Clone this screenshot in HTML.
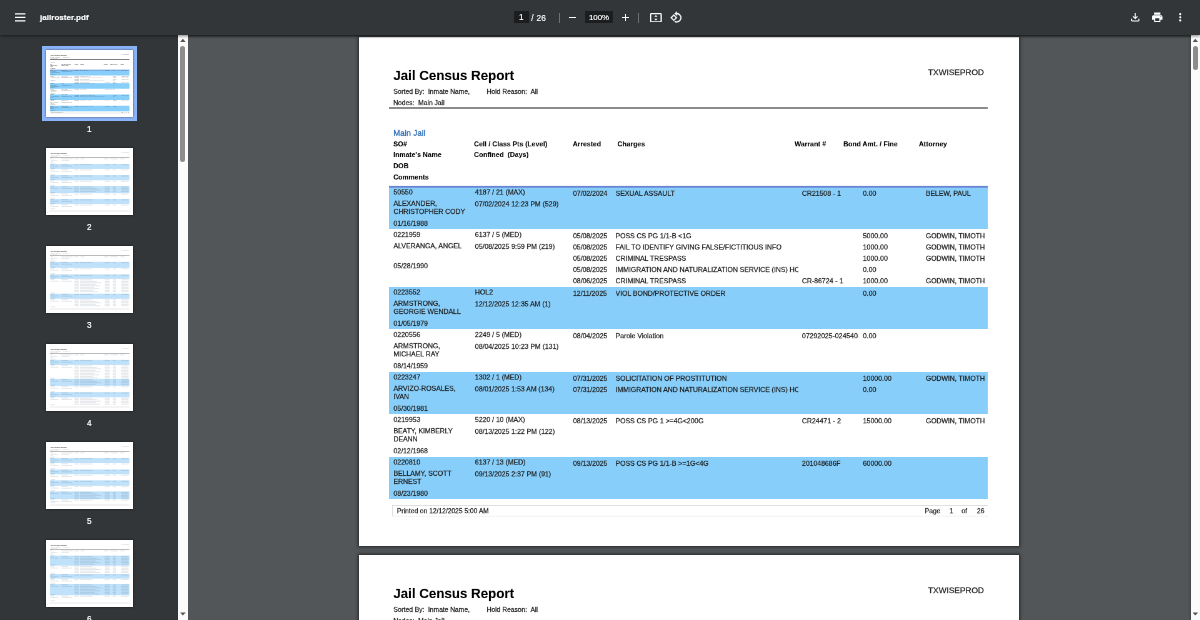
<!DOCTYPE html>
<html lang="en"><head><meta charset="utf-8"><title>jailroster.pdf</title>
<style>
html,body{margin:0;padding:0}
body{width:1200px;height:620px;overflow:hidden;position:relative;background:#525659;font-family:"Liberation Sans",Arial,sans-serif;}
#main{position:absolute;left:188px;top:35px;width:1002.5px;height:585px;background:#525659;overflow:hidden}
#mshadow{position:absolute;left:178px;top:35px;width:1022px;height:3px;background:linear-gradient(#2c2f31,rgba(50,54,57,0));}
.pg{position:absolute;width:1056px;height:816px;background:#fff;transform-origin:0 0;overflow:hidden;color:#1c1c1c;will-change:transform}
.pg span{position:absolute;white-space:nowrap;display:block;-webkit-text-stroke:0.3px}
.pg i{position:absolute;display:block}
.pg .b{font-weight:bold;color:#000;-webkit-text-stroke:0.08px}
.band{background:#87cefa}
.hline{height:2.9px;background:#6a84d4}
.rule{height:2.7px;background:#8c8c8c}
.fbox{box-sizing:border-box;border:1.6px solid #dcdcdc;border-right:none;background:#fff}
.pshadow{position:absolute;background:transparent;box-shadow:0 0 3px 1px rgba(0,0,0,.55)}
#tb{position:absolute;left:0;top:0;width:1200px;height:35px;background:#323639;color:#fff;box-shadow:0 1px 3px rgba(0,0,0,.5);will-change:transform}
#side{position:absolute;left:0;top:35px;width:178px;height:585px;background:#323639;overflow:hidden;will-change:transform}
.sb{position:absolute;top:35px;width:10px;height:585px;background:#fbfbfb}
.sb b{position:absolute;left:2.3px;width:5.2px;border-radius:3px;background:#8c8c8c;display:block}
.sb i{position:absolute;left:2.1px;width:5.6px;height:3.2px;background:#555;display:block}
.sb .up{top:3.7px;clip-path:polygon(50% 0,100% 100%,0 100%)}
.sb .dn{bottom:4.4px;clip-path:polygon(0 0,100% 0,50% 100%)}
.th{position:absolute;left:45.6px;width:87.6px;height:67.7px;background:#fff;overflow:hidden;box-shadow:0 0 2px rgba(0,0,0,.6)}
.th .pg{transform:scale(0.08296)}
.th .pg span{-webkit-text-stroke:0;color:#3a3a3a;opacity:.6}
.th .pg .b{color:#222;opacity:.75}
.th .hline{height:8px}
.th .rule{height:9px;background:#555;margin-top:-3px}
.th .fbox{border-width:5px;border-color:#e4e4e4}
.lite .band{background:#bfe1f9}
.lite .pg span{color:#999}
.lite .pg .b{color:#999}
.lite .rule{background:#999;height:8px}
.sm{height:9px;background:rgba(40,60,90,.16)}
.tl{position:absolute;left:45.3px;width:88px;text-align:center;color:#fff;font-size:8.2px;line-height:10px;-webkit-text-stroke:0.2px;margin-top:.7px}
#sel{position:absolute;left:41.6px;top:46px;width:95.4px;height:75.2px;background:#8ab4f8}
#tb span,#tb i,#tb svg{position:absolute;display:block}
#tb span{-webkit-text-stroke:0.15px}
</style></head><body>
<div id="main">
<div class="pshadow" style="left:171.0px;top:2.0px;width:660px;height:509.4px"></div>
<div class="pshadow" style="left:171.0px;top:520px;width:660px;height:510px"></div>
<div class="pg big" style="left:171.0px;top:2.0px;height:815px;transform:scale(.625)">
<span class="b" style="left:54.88px;top:51.94px;font-size:21.33px;line-height:21.33px;color:#000;">Jail Census Report</span>
<span style="left:910.4px;top:49.84px;font-size:13.33px;line-height:13.33px;">TXWISEPROD</span>
<span style="left:54.88px;top:81.85px;font-size:10.67px;line-height:10.67px;">Sorted By:</span>
<span style="left:110.4px;top:81.85px;font-size:10.67px;line-height:10.67px;">Inmate Name,</span>
<span style="left:204.32px;top:81.85px;font-size:10.67px;line-height:10.67px;">Hold Reason:</span>
<span style="left:274.4px;top:81.85px;font-size:10.67px;line-height:10.67px;">All</span>
<span style="left:54.88px;top:99.77px;font-size:10.67px;line-height:10.67px;">Nodes:</span>
<span style="left:94.72px;top:99.77px;font-size:10.67px;line-height:10.67px;">Main Jail</span>
<i class="rule" style="left:48.0px;top:112.0px;width:958.4px"></i>
<span style="left:54.88px;top:146.6px;font-size:13px;line-height:13px;color:#2a6ab5;">Main Jail</span>
<span class="b" style="left:54.88px;top:165.89px;font-size:11px;line-height:11px;">SO#</span>
<span class="b" style="left:54.88px;top:183.49px;font-size:11px;line-height:11px;">Inmate's Name</span>
<span class="b" style="left:54.88px;top:201.41px;font-size:11px;line-height:11px;">DOB</span>
<span class="b" style="left:54.88px;top:219.49px;font-size:11px;line-height:11px;">Comments</span>
<span class="b" style="left:184.0px;top:165.89px;font-size:11px;line-height:11px;">Cell / Class Pts (Level)</span>
<span class="b" style="left:184.0px;top:183.49px;font-size:11px;line-height:11px;">Confined  (Days)</span>
<span class="b" style="left:341.92px;top:165.89px;font-size:11px;line-height:11px;">Arrested</span>
<span class="b" style="left:413.6px;top:165.89px;font-size:11px;line-height:11px;">Charges</span>
<span class="b" style="left:697.12px;top:165.89px;font-size:11px;line-height:11px;">Warrant #</span>
<span class="b" style="left:774.88px;top:165.89px;font-size:11px;line-height:11px;">Bond Amt. / Fine</span>
<span class="b" style="left:895.68px;top:165.89px;font-size:11px;line-height:11px;">Attorney</span>
<i class="band" style="left:48.0px;top:239.82px;width:957.6px;height:67.3px"></i>
<i class="hline" style="left:48.0px;top:238.42px;width:957.6px"></i>
<span style="left:55.2px;top:243.21px;font-size:11px;line-height:11px;">50550</span>
<span style="left:55.2px;top:260.81px;font-size:11px;line-height:11px;">ALEXANDER,</span>
<span style="left:55.2px;top:274.11px;font-size:11px;line-height:11px;">CHRISTOPHER CODY</span>
<span style="left:55.2px;top:292.81px;font-size:11px;line-height:11px;">01/16/1988</span>
<span style="left:185.6px;top:243.21px;font-size:11px;line-height:11px;">4187 / 21 (MAX)</span>
<span style="left:185.6px;top:262.41px;font-size:11px;line-height:11px;">07/02/2024 12:23 PM (529)</span>
<span style="left:342.4px;top:245.41px;font-size:11px;line-height:11px;">07/02/2024</span>
<span style="left:410.56px;top:245.41px;font-size:11px;line-height:11px;width:292.16px;overflow:hidden;">SEXUAL ASSAULT</span>
<span style="left:708.8px;top:245.41px;font-size:11px;line-height:11px;width:90.56px;overflow:hidden;">CR21508 - 1</span>
<span style="left:806.24px;top:245.41px;font-size:11px;line-height:11px;">0.00</span>
<span style="left:906.88px;top:245.41px;font-size:11px;line-height:11px;width:94.4px;overflow:hidden;">BELEW, PAUL</span>
<span style="left:55.2px;top:311.21px;font-size:11px;line-height:11px;">0221959</span>
<span style="left:55.2px;top:328.81px;font-size:11px;line-height:11px;">ALVERANGA, ANGEL</span>
<span style="left:55.2px;top:360.81px;font-size:11px;line-height:11px;">05/28/1990</span>
<span style="left:185.6px;top:311.21px;font-size:11px;line-height:11px;">6137 / 5 (MED)</span>
<span style="left:185.6px;top:330.41px;font-size:11px;line-height:11px;">05/08/2025 9:59 PM (219)</span>
<span style="left:342.4px;top:313.41px;font-size:11px;line-height:11px;">05/08/2025</span>
<span style="left:410.56px;top:313.41px;font-size:11px;line-height:11px;width:292.16px;overflow:hidden;">POSS CS PG 1/1-B &lt;1G</span>
<span style="left:806.24px;top:313.41px;font-size:11px;line-height:11px;">5000.00</span>
<span style="left:906.88px;top:313.41px;font-size:11px;line-height:11px;width:94.4px;overflow:hidden;">GODWIN, TIMOTHY</span>
<span style="left:342.4px;top:331.41px;font-size:11px;line-height:11px;">05/08/2025</span>
<span style="left:410.56px;top:331.41px;font-size:11px;line-height:11px;width:292.16px;overflow:hidden;">FAIL TO IDENTIFY GIVING FALSE/FICTITIOUS INFO</span>
<span style="left:806.24px;top:331.41px;font-size:11px;line-height:11px;">1000.00</span>
<span style="left:906.88px;top:331.41px;font-size:11px;line-height:11px;width:94.4px;overflow:hidden;">GODWIN, TIMOTHY</span>
<span style="left:342.4px;top:349.41px;font-size:11px;line-height:11px;">05/08/2025</span>
<span style="left:410.56px;top:349.41px;font-size:11px;line-height:11px;width:292.16px;overflow:hidden;">CRIMINAL TRESPASS</span>
<span style="left:806.24px;top:349.41px;font-size:11px;line-height:11px;">1000.00</span>
<span style="left:906.88px;top:349.41px;font-size:11px;line-height:11px;width:94.4px;overflow:hidden;">GODWIN, TIMOTHY</span>
<span style="left:342.4px;top:367.41px;font-size:11px;line-height:11px;">05/08/2025</span>
<span style="left:410.56px;top:367.41px;font-size:11px;line-height:11px;width:292.16px;overflow:hidden;">IMMIGRATION AND NATURALIZATION SERVICE (INS) HOLD</span>
<span style="left:806.24px;top:367.41px;font-size:11px;line-height:11px;">0.00</span>
<span style="left:342.4px;top:385.41px;font-size:11px;line-height:11px;">08/06/2025</span>
<span style="left:410.56px;top:385.41px;font-size:11px;line-height:11px;width:292.16px;overflow:hidden;">CRIMINAL TRESPASS</span>
<span style="left:708.8px;top:385.41px;font-size:11px;line-height:11px;width:90.56px;overflow:hidden;">CR-86724 - 1</span>
<span style="left:806.24px;top:385.41px;font-size:11px;line-height:11px;">1000.00</span>
<span style="left:906.88px;top:385.41px;font-size:11px;line-height:11px;width:94.4px;overflow:hidden;">GODWIN, TIMOTHY</span>
<i class="band" style="left:48.0px;top:399.82px;width:957.6px;height:67.3px"></i>
<span style="left:55.2px;top:403.21px;font-size:11px;line-height:11px;">0223552</span>
<span style="left:55.2px;top:420.81px;font-size:11px;line-height:11px;">ARMSTRONG,</span>
<span style="left:55.2px;top:434.11px;font-size:11px;line-height:11px;">GEORGIE WENDALL</span>
<span style="left:55.2px;top:452.81px;font-size:11px;line-height:11px;">01/05/1979</span>
<span style="left:185.6px;top:403.21px;font-size:11px;line-height:11px;">HOL2</span>
<span style="left:185.6px;top:422.41px;font-size:11px;line-height:11px;">12/12/2025 12:35 AM (1)</span>
<span style="left:342.4px;top:405.41px;font-size:11px;line-height:11px;">12/11/2025</span>
<span style="left:410.56px;top:405.41px;font-size:11px;line-height:11px;width:292.16px;overflow:hidden;">VIOL BOND/PROTECTIVE ORDER</span>
<span style="left:806.24px;top:405.41px;font-size:11px;line-height:11px;">0.00</span>
<span style="left:55.2px;top:471.21px;font-size:11px;line-height:11px;">0220556</span>
<span style="left:55.2px;top:488.81px;font-size:11px;line-height:11px;">ARMSTRONG,</span>
<span style="left:55.2px;top:502.11px;font-size:11px;line-height:11px;">MICHAEL RAY</span>
<span style="left:55.2px;top:520.81px;font-size:11px;line-height:11px;">08/14/1959</span>
<span style="left:185.6px;top:471.21px;font-size:11px;line-height:11px;">2249 / 5 (MED)</span>
<span style="left:185.6px;top:490.41px;font-size:11px;line-height:11px;">08/04/2025 10:23 PM (131)</span>
<span style="left:342.4px;top:473.41px;font-size:11px;line-height:11px;">08/04/2025</span>
<span style="left:410.56px;top:473.41px;font-size:11px;line-height:11px;width:292.16px;overflow:hidden;">Parole Violation</span>
<span style="left:708.8px;top:473.41px;font-size:11px;line-height:11px;width:90.56px;overflow:hidden;">07292025-02454036</span>
<span style="left:806.24px;top:473.41px;font-size:11px;line-height:11px;">0.00</span>
<i class="band" style="left:48.0px;top:535.82px;width:957.6px;height:67.3px"></i>
<span style="left:55.2px;top:539.21px;font-size:11px;line-height:11px;">0223247</span>
<span style="left:55.2px;top:556.81px;font-size:11px;line-height:11px;">ARVIZO-ROSALES,</span>
<span style="left:55.2px;top:570.11px;font-size:11px;line-height:11px;">IVAN</span>
<span style="left:55.2px;top:588.81px;font-size:11px;line-height:11px;">05/30/1981</span>
<span style="left:185.6px;top:539.21px;font-size:11px;line-height:11px;">1302 / 1 (MED)</span>
<span style="left:185.6px;top:558.41px;font-size:11px;line-height:11px;">08/01/2025 1:53 AM (134)</span>
<span style="left:342.4px;top:541.41px;font-size:11px;line-height:11px;">07/31/2025</span>
<span style="left:410.56px;top:541.41px;font-size:11px;line-height:11px;width:292.16px;overflow:hidden;">SOLICITATION OF PROSTITUTION</span>
<span style="left:806.24px;top:541.41px;font-size:11px;line-height:11px;">10000.00</span>
<span style="left:906.88px;top:541.41px;font-size:11px;line-height:11px;width:94.4px;overflow:hidden;">GODWIN, TIMOTHY</span>
<span style="left:342.4px;top:559.41px;font-size:11px;line-height:11px;">07/31/2025</span>
<span style="left:410.56px;top:559.41px;font-size:11px;line-height:11px;width:292.16px;overflow:hidden;">IMMIGRATION AND NATURALIZATION SERVICE (INS) HOLD</span>
<span style="left:806.24px;top:559.41px;font-size:11px;line-height:11px;">0.00</span>
<span style="left:55.2px;top:607.21px;font-size:11px;line-height:11px;">0219953</span>
<span style="left:55.2px;top:624.81px;font-size:11px;line-height:11px;">BEATY, KIMBERLY</span>
<span style="left:55.2px;top:638.11px;font-size:11px;line-height:11px;">DEANN</span>
<span style="left:55.2px;top:656.81px;font-size:11px;line-height:11px;">02/12/1968</span>
<span style="left:185.6px;top:607.21px;font-size:11px;line-height:11px;">5220 / 10 (MAX)</span>
<span style="left:185.6px;top:626.41px;font-size:11px;line-height:11px;">08/13/2025 1:22 PM (122)</span>
<span style="left:342.4px;top:609.41px;font-size:11px;line-height:11px;">08/13/2025</span>
<span style="left:410.56px;top:609.41px;font-size:11px;line-height:11px;width:292.16px;overflow:hidden;">POSS CS PG 1 &gt;=4G&lt;200G</span>
<span style="left:708.8px;top:609.41px;font-size:11px;line-height:11px;width:90.56px;overflow:hidden;">CR24471 - 2</span>
<span style="left:806.24px;top:609.41px;font-size:11px;line-height:11px;">15000.00</span>
<span style="left:906.88px;top:609.41px;font-size:11px;line-height:11px;width:94.4px;overflow:hidden;">GODWIN, TIMOTHY</span>
<i class="band" style="left:48.0px;top:671.82px;width:957.6px;height:67.3px"></i>
<span style="left:55.2px;top:675.21px;font-size:11px;line-height:11px;">0220810</span>
<span style="left:55.2px;top:692.81px;font-size:11px;line-height:11px;">BELLAMY, SCOTT</span>
<span style="left:55.2px;top:706.11px;font-size:11px;line-height:11px;">ERNEST</span>
<span style="left:55.2px;top:724.81px;font-size:11px;line-height:11px;">08/23/1980</span>
<span style="left:185.6px;top:675.21px;font-size:11px;line-height:11px;">6137 / 13 (MED)</span>
<span style="left:185.6px;top:694.41px;font-size:11px;line-height:11px;">09/13/2025 2:37 PM (91)</span>
<span style="left:342.4px;top:677.41px;font-size:11px;line-height:11px;">09/13/2025</span>
<span style="left:410.56px;top:677.41px;font-size:11px;line-height:11px;width:292.16px;overflow:hidden;">POSS CS PG 1/1-B &gt;=1G&lt;4G</span>
<span style="left:708.8px;top:677.41px;font-size:11px;line-height:11px;width:90.56px;overflow:hidden;">201048686F</span>
<span style="left:806.24px;top:677.41px;font-size:11px;line-height:11px;">60000.00</span>
<i class="fbox" style="left:53.12px;top:748.96px;width:953.28px;height:17.76px"></i>
<span style="left:60.8px;top:752.73px;font-size:10.67px;line-height:10.67px;">Printed on 12/12/2025 5:00 AM</span>
<span style="left:905.28px;top:752.73px;font-size:10.67px;line-height:10.67px;">Page</span>
<span style="left:944.8px;top:752.73px;font-size:10.67px;line-height:10.67px;">1</span>
<span style="left:964.0px;top:752.73px;font-size:10.67px;line-height:10.67px;">of</span>
<span style="left:988.8px;top:752.73px;font-size:10.67px;line-height:10.67px;">26</span>
</div>
<div class="pg big" style="left:171.0px;top:520px;transform:scale(.625)">
<span class="b" style="left:54.88px;top:51.94px;font-size:21.33px;line-height:21.33px;color:#000;">Jail Census Report</span>
<span style="left:910.4px;top:49.84px;font-size:13.33px;line-height:13.33px;">TXWISEPROD</span>
<span style="left:54.88px;top:81.85px;font-size:10.67px;line-height:10.67px;">Sorted By:</span>
<span style="left:110.4px;top:81.85px;font-size:10.67px;line-height:10.67px;">Inmate Name,</span>
<span style="left:204.32px;top:81.85px;font-size:10.67px;line-height:10.67px;">Hold Reason:</span>
<span style="left:274.4px;top:81.85px;font-size:10.67px;line-height:10.67px;">All</span>
<span style="left:54.88px;top:99.77px;font-size:10.67px;line-height:10.67px;">Nodes:</span>
<span style="left:94.72px;top:99.77px;font-size:10.67px;line-height:10.67px;">Main Jail</span>
<i class="rule" style="left:48.0px;top:112.0px;width:958.4px"></i>
</div>
</div>
<div id="mshadow"></div>
<div id="side">
<div id="sel" style="top:11px"></div>
<div class="th" style="top:14.700000000000003px"><div class="pg" style="left:0;top:0">
<span class="b" style="left:54.88px;top:51.94px;font-size:21.33px;line-height:21.33px;color:#000;">Jail Census Report</span>
<span style="left:910.4px;top:49.84px;font-size:13.33px;line-height:13.33px;">TXWISEPROD</span>
<span style="left:54.88px;top:81.85px;font-size:10.67px;line-height:10.67px;">Sorted By:</span>
<span style="left:110.4px;top:81.85px;font-size:10.67px;line-height:10.67px;">Inmate Name,</span>
<span style="left:204.32px;top:81.85px;font-size:10.67px;line-height:10.67px;">Hold Reason:</span>
<span style="left:274.4px;top:81.85px;font-size:10.67px;line-height:10.67px;">All</span>
<span style="left:54.88px;top:99.77px;font-size:10.67px;line-height:10.67px;">Nodes:</span>
<span style="left:94.72px;top:99.77px;font-size:10.67px;line-height:10.67px;">Main Jail</span>
<i class="rule" style="left:48.0px;top:112.0px;width:958.4px"></i>
<span style="left:54.88px;top:146.6px;font-size:13px;line-height:13px;color:#2a6ab5;">Main Jail</span>
<span class="b" style="left:54.88px;top:165.89px;font-size:11px;line-height:11px;">SO#</span>
<span class="b" style="left:54.88px;top:183.49px;font-size:11px;line-height:11px;">Inmate's Name</span>
<span class="b" style="left:54.88px;top:201.41px;font-size:11px;line-height:11px;">DOB</span>
<span class="b" style="left:54.88px;top:219.49px;font-size:11px;line-height:11px;">Comments</span>
<span class="b" style="left:184.0px;top:165.89px;font-size:11px;line-height:11px;">Cell / Class Pts (Level)</span>
<span class="b" style="left:184.0px;top:183.49px;font-size:11px;line-height:11px;">Confined  (Days)</span>
<span class="b" style="left:341.92px;top:165.89px;font-size:11px;line-height:11px;">Arrested</span>
<span class="b" style="left:413.6px;top:165.89px;font-size:11px;line-height:11px;">Charges</span>
<span class="b" style="left:697.12px;top:165.89px;font-size:11px;line-height:11px;">Warrant #</span>
<span class="b" style="left:774.88px;top:165.89px;font-size:11px;line-height:11px;">Bond Amt. / Fine</span>
<span class="b" style="left:895.68px;top:165.89px;font-size:11px;line-height:11px;">Attorney</span>
<i class="band" style="left:48.0px;top:239.82px;width:957.6px;height:67.3px"></i>
<i class="hline" style="left:48.0px;top:238.42px;width:957.6px"></i>
<span style="left:55.2px;top:243.21px;font-size:11px;line-height:11px;">50550</span>
<span style="left:55.2px;top:260.81px;font-size:11px;line-height:11px;">ALEXANDER,</span>
<span style="left:55.2px;top:274.11px;font-size:11px;line-height:11px;">CHRISTOPHER CODY</span>
<span style="left:55.2px;top:292.81px;font-size:11px;line-height:11px;">01/16/1988</span>
<span style="left:185.6px;top:243.21px;font-size:11px;line-height:11px;">4187 / 21 (MAX)</span>
<span style="left:185.6px;top:262.41px;font-size:11px;line-height:11px;">07/02/2024 12:23 PM (529)</span>
<span style="left:342.4px;top:245.41px;font-size:11px;line-height:11px;">07/02/2024</span>
<span style="left:410.56px;top:245.41px;font-size:11px;line-height:11px;width:292.16px;overflow:hidden;">SEXUAL ASSAULT</span>
<span style="left:708.8px;top:245.41px;font-size:11px;line-height:11px;width:90.56px;overflow:hidden;">CR21508 - 1</span>
<span style="left:806.24px;top:245.41px;font-size:11px;line-height:11px;">0.00</span>
<span style="left:906.88px;top:245.41px;font-size:11px;line-height:11px;width:94.4px;overflow:hidden;">BELEW, PAUL</span>
<span style="left:55.2px;top:311.21px;font-size:11px;line-height:11px;">0221959</span>
<span style="left:55.2px;top:328.81px;font-size:11px;line-height:11px;">ALVERANGA, ANGEL</span>
<span style="left:55.2px;top:360.81px;font-size:11px;line-height:11px;">05/28/1990</span>
<span style="left:185.6px;top:311.21px;font-size:11px;line-height:11px;">6137 / 5 (MED)</span>
<span style="left:185.6px;top:330.41px;font-size:11px;line-height:11px;">05/08/2025 9:59 PM (219)</span>
<span style="left:342.4px;top:313.41px;font-size:11px;line-height:11px;">05/08/2025</span>
<span style="left:410.56px;top:313.41px;font-size:11px;line-height:11px;width:292.16px;overflow:hidden;">POSS CS PG 1/1-B &lt;1G</span>
<span style="left:806.24px;top:313.41px;font-size:11px;line-height:11px;">5000.00</span>
<span style="left:906.88px;top:313.41px;font-size:11px;line-height:11px;width:94.4px;overflow:hidden;">GODWIN, TIMOTHY</span>
<span style="left:342.4px;top:331.41px;font-size:11px;line-height:11px;">05/08/2025</span>
<span style="left:410.56px;top:331.41px;font-size:11px;line-height:11px;width:292.16px;overflow:hidden;">FAIL TO IDENTIFY GIVING FALSE/FICTITIOUS INFO</span>
<span style="left:806.24px;top:331.41px;font-size:11px;line-height:11px;">1000.00</span>
<span style="left:906.88px;top:331.41px;font-size:11px;line-height:11px;width:94.4px;overflow:hidden;">GODWIN, TIMOTHY</span>
<span style="left:342.4px;top:349.41px;font-size:11px;line-height:11px;">05/08/2025</span>
<span style="left:410.56px;top:349.41px;font-size:11px;line-height:11px;width:292.16px;overflow:hidden;">CRIMINAL TRESPASS</span>
<span style="left:806.24px;top:349.41px;font-size:11px;line-height:11px;">1000.00</span>
<span style="left:906.88px;top:349.41px;font-size:11px;line-height:11px;width:94.4px;overflow:hidden;">GODWIN, TIMOTHY</span>
<span style="left:342.4px;top:367.41px;font-size:11px;line-height:11px;">05/08/2025</span>
<span style="left:410.56px;top:367.41px;font-size:11px;line-height:11px;width:292.16px;overflow:hidden;">IMMIGRATION AND NATURALIZATION SERVICE (INS) HOLD</span>
<span style="left:806.24px;top:367.41px;font-size:11px;line-height:11px;">0.00</span>
<span style="left:342.4px;top:385.41px;font-size:11px;line-height:11px;">08/06/2025</span>
<span style="left:410.56px;top:385.41px;font-size:11px;line-height:11px;width:292.16px;overflow:hidden;">CRIMINAL TRESPASS</span>
<span style="left:708.8px;top:385.41px;font-size:11px;line-height:11px;width:90.56px;overflow:hidden;">CR-86724 - 1</span>
<span style="left:806.24px;top:385.41px;font-size:11px;line-height:11px;">1000.00</span>
<span style="left:906.88px;top:385.41px;font-size:11px;line-height:11px;width:94.4px;overflow:hidden;">GODWIN, TIMOTHY</span>
<i class="band" style="left:48.0px;top:399.82px;width:957.6px;height:67.3px"></i>
<span style="left:55.2px;top:403.21px;font-size:11px;line-height:11px;">0223552</span>
<span style="left:55.2px;top:420.81px;font-size:11px;line-height:11px;">ARMSTRONG,</span>
<span style="left:55.2px;top:434.11px;font-size:11px;line-height:11px;">GEORGIE WENDALL</span>
<span style="left:55.2px;top:452.81px;font-size:11px;line-height:11px;">01/05/1979</span>
<span style="left:185.6px;top:403.21px;font-size:11px;line-height:11px;">HOL2</span>
<span style="left:185.6px;top:422.41px;font-size:11px;line-height:11px;">12/12/2025 12:35 AM (1)</span>
<span style="left:342.4px;top:405.41px;font-size:11px;line-height:11px;">12/11/2025</span>
<span style="left:410.56px;top:405.41px;font-size:11px;line-height:11px;width:292.16px;overflow:hidden;">VIOL BOND/PROTECTIVE ORDER</span>
<span style="left:806.24px;top:405.41px;font-size:11px;line-height:11px;">0.00</span>
<span style="left:55.2px;top:471.21px;font-size:11px;line-height:11px;">0220556</span>
<span style="left:55.2px;top:488.81px;font-size:11px;line-height:11px;">ARMSTRONG,</span>
<span style="left:55.2px;top:502.11px;font-size:11px;line-height:11px;">MICHAEL RAY</span>
<span style="left:55.2px;top:520.81px;font-size:11px;line-height:11px;">08/14/1959</span>
<span style="left:185.6px;top:471.21px;font-size:11px;line-height:11px;">2249 / 5 (MED)</span>
<span style="left:185.6px;top:490.41px;font-size:11px;line-height:11px;">08/04/2025 10:23 PM (131)</span>
<span style="left:342.4px;top:473.41px;font-size:11px;line-height:11px;">08/04/2025</span>
<span style="left:410.56px;top:473.41px;font-size:11px;line-height:11px;width:292.16px;overflow:hidden;">Parole Violation</span>
<span style="left:708.8px;top:473.41px;font-size:11px;line-height:11px;width:90.56px;overflow:hidden;">07292025-02454036</span>
<span style="left:806.24px;top:473.41px;font-size:11px;line-height:11px;">0.00</span>
<i class="band" style="left:48.0px;top:535.82px;width:957.6px;height:67.3px"></i>
<span style="left:55.2px;top:539.21px;font-size:11px;line-height:11px;">0223247</span>
<span style="left:55.2px;top:556.81px;font-size:11px;line-height:11px;">ARVIZO-ROSALES,</span>
<span style="left:55.2px;top:570.11px;font-size:11px;line-height:11px;">IVAN</span>
<span style="left:55.2px;top:588.81px;font-size:11px;line-height:11px;">05/30/1981</span>
<span style="left:185.6px;top:539.21px;font-size:11px;line-height:11px;">1302 / 1 (MED)</span>
<span style="left:185.6px;top:558.41px;font-size:11px;line-height:11px;">08/01/2025 1:53 AM (134)</span>
<span style="left:342.4px;top:541.41px;font-size:11px;line-height:11px;">07/31/2025</span>
<span style="left:410.56px;top:541.41px;font-size:11px;line-height:11px;width:292.16px;overflow:hidden;">SOLICITATION OF PROSTITUTION</span>
<span style="left:806.24px;top:541.41px;font-size:11px;line-height:11px;">10000.00</span>
<span style="left:906.88px;top:541.41px;font-size:11px;line-height:11px;width:94.4px;overflow:hidden;">GODWIN, TIMOTHY</span>
<span style="left:342.4px;top:559.41px;font-size:11px;line-height:11px;">07/31/2025</span>
<span style="left:410.56px;top:559.41px;font-size:11px;line-height:11px;width:292.16px;overflow:hidden;">IMMIGRATION AND NATURALIZATION SERVICE (INS) HOLD</span>
<span style="left:806.24px;top:559.41px;font-size:11px;line-height:11px;">0.00</span>
<span style="left:55.2px;top:607.21px;font-size:11px;line-height:11px;">0219953</span>
<span style="left:55.2px;top:624.81px;font-size:11px;line-height:11px;">BEATY, KIMBERLY</span>
<span style="left:55.2px;top:638.11px;font-size:11px;line-height:11px;">DEANN</span>
<span style="left:55.2px;top:656.81px;font-size:11px;line-height:11px;">02/12/1968</span>
<span style="left:185.6px;top:607.21px;font-size:11px;line-height:11px;">5220 / 10 (MAX)</span>
<span style="left:185.6px;top:626.41px;font-size:11px;line-height:11px;">08/13/2025 1:22 PM (122)</span>
<span style="left:342.4px;top:609.41px;font-size:11px;line-height:11px;">08/13/2025</span>
<span style="left:410.56px;top:609.41px;font-size:11px;line-height:11px;width:292.16px;overflow:hidden;">POSS CS PG 1 &gt;=4G&lt;200G</span>
<span style="left:708.8px;top:609.41px;font-size:11px;line-height:11px;width:90.56px;overflow:hidden;">CR24471 - 2</span>
<span style="left:806.24px;top:609.41px;font-size:11px;line-height:11px;">15000.00</span>
<span style="left:906.88px;top:609.41px;font-size:11px;line-height:11px;width:94.4px;overflow:hidden;">GODWIN, TIMOTHY</span>
<i class="band" style="left:48.0px;top:671.82px;width:957.6px;height:67.3px"></i>
<span style="left:55.2px;top:675.21px;font-size:11px;line-height:11px;">0220810</span>
<span style="left:55.2px;top:692.81px;font-size:11px;line-height:11px;">BELLAMY, SCOTT</span>
<span style="left:55.2px;top:706.11px;font-size:11px;line-height:11px;">ERNEST</span>
<span style="left:55.2px;top:724.81px;font-size:11px;line-height:11px;">08/23/1980</span>
<span style="left:185.6px;top:675.21px;font-size:11px;line-height:11px;">6137 / 13 (MED)</span>
<span style="left:185.6px;top:694.41px;font-size:11px;line-height:11px;">09/13/2025 2:37 PM (91)</span>
<span style="left:342.4px;top:677.41px;font-size:11px;line-height:11px;">09/13/2025</span>
<span style="left:410.56px;top:677.41px;font-size:11px;line-height:11px;width:292.16px;overflow:hidden;">POSS CS PG 1/1-B &gt;=1G&lt;4G</span>
<span style="left:708.8px;top:677.41px;font-size:11px;line-height:11px;width:90.56px;overflow:hidden;">201048686F</span>
<span style="left:806.24px;top:677.41px;font-size:11px;line-height:11px;">60000.00</span>
<i class="fbox" style="left:53.12px;top:748.96px;width:953.28px;height:17.76px"></i>
<span style="left:60.8px;top:752.73px;font-size:10.67px;line-height:10.67px;">Printed on 12/12/2025 5:00 AM</span>
<span style="left:905.28px;top:752.73px;font-size:10.67px;line-height:10.67px;">Page</span>
<span style="left:944.8px;top:752.73px;font-size:10.67px;line-height:10.67px;">1</span>
<span style="left:964.0px;top:752.73px;font-size:10.67px;line-height:10.67px;">of</span>
<span style="left:988.8px;top:752.73px;font-size:10.67px;line-height:10.67px;">26</span>
</div></div>
<div class="tl" style="top:89.0px">1</div>
<div class="th lite" style="top:112.69999999999999px"><div class="pg" style="left:0;top:0">
<span class="b" style="left:54.88px;top:51.94px;font-size:21.33px;line-height:21.33px;color:#000;">Jail Census Report</span>
<span style="left:910.4px;top:49.84px;font-size:13.33px;line-height:13.33px;">TXWISEPROD</span>
<span style="left:54.88px;top:81.85px;font-size:10.67px;line-height:10.67px;">Sorted By:</span>
<span style="left:110.4px;top:81.85px;font-size:10.67px;line-height:10.67px;">Inmate Name,</span>
<span style="left:204.32px;top:81.85px;font-size:10.67px;line-height:10.67px;">Hold Reason:</span>
<span style="left:274.4px;top:81.85px;font-size:10.67px;line-height:10.67px;">All</span>
<span style="left:54.88px;top:99.77px;font-size:10.67px;line-height:10.67px;">Nodes:</span>
<span style="left:94.72px;top:99.77px;font-size:10.67px;line-height:10.67px;">Main Jail</span>
<i class="rule" style="left:48.0px;top:112.0px;width:958.4px"></i>
<i class="sm" style="left:55px;top:126px;width:30px"></i>
<i class="sm" style="left:184px;top:126px;width:140px"></i>
<i class="sm" style="left:342px;top:126px;width:50px"></i>
<i class="sm" style="left:414px;top:126px;width:50px"></i>
<i class="sm" style="left:698px;top:126px;width:55px"></i>
<i class="sm" style="left:775px;top:126px;width:90px"></i>
<i class="sm" style="left:895px;top:126px;width:50px"></i>
<i class="sm" style="left:55px;top:144px;width:80px"></i><i class="sm" style="left:184px;top:144px;width:95px"></i>
<i class="sm" style="left:55px;top:162px;width:28px"></i><i class="sm" style="left:55px;top:178px;width:58px"></i>
<i class="band" style="left:48px;top:194px;width:958px;height:58px"></i>
<i class="band" style="left:48px;top:326px;width:958px;height:63px"></i>
<i class="band" style="left:48px;top:458px;width:958px;height:86px"></i>
<i class="band" style="left:48px;top:614px;width:958px;height:62px"></i>
<i class="sm" style="left:55px;top:195px;width:42px"></i>
<i class="sm" style="left:55px;top:213px;width:95px"></i>
<i class="sm" style="left:55px;top:238px;width:55px"></i>
<i class="sm" style="left:185px;top:195px;width:80px"></i>
<i class="sm" style="left:185px;top:214px;width:130px"></i>
<i class="sm" style="left:342px;top:197px;width:54px"></i>
<i class="sm" style="left:410px;top:197px;width:150px"></i>
<i class="sm" style="left:708px;top:197px;width:60px"></i>
<i class="sm" style="left:806px;top:197px;width:38px"></i>
<i class="sm" style="left:906px;top:197px;width:90px"></i>
<i class="sm" style="left:55px;top:257px;width:42px"></i>
<i class="sm" style="left:55px;top:275px;width:95px"></i>
<i class="sm" style="left:55px;top:312px;width:55px"></i>
<i class="sm" style="left:185px;top:257px;width:80px"></i>
<i class="sm" style="left:185px;top:276px;width:130px"></i>
<i class="sm" style="left:342px;top:259px;width:54px"></i>
<i class="sm" style="left:410px;top:259px;width:150px"></i>
<i class="sm" style="left:708px;top:259px;width:60px"></i>
<i class="sm" style="left:806px;top:259px;width:38px"></i>
<i class="sm" style="left:906px;top:259px;width:90px"></i>
<i class="sm" style="left:55px;top:331px;width:42px"></i>
<i class="sm" style="left:55px;top:349px;width:95px"></i>
<i class="sm" style="left:55px;top:375px;width:55px"></i>
<i class="sm" style="left:185px;top:331px;width:80px"></i>
<i class="sm" style="left:185px;top:350px;width:130px"></i>
<i class="sm" style="left:342px;top:333px;width:54px"></i>
<i class="sm" style="left:410px;top:333px;width:150px"></i>
<i class="sm" style="left:708px;top:333px;width:60px"></i>
<i class="sm" style="left:806px;top:333px;width:38px"></i>
<i class="sm" style="left:906px;top:333px;width:90px"></i>
<i class="sm" style="left:55px;top:394px;width:42px"></i>
<i class="sm" style="left:55px;top:412px;width:95px"></i>
<i class="sm" style="left:55px;top:444px;width:55px"></i>
<i class="sm" style="left:185px;top:394px;width:80px"></i>
<i class="sm" style="left:185px;top:413px;width:130px"></i>
<i class="sm" style="left:342px;top:396px;width:54px"></i>
<i class="sm" style="left:410px;top:396px;width:150px"></i>
<i class="sm" style="left:708px;top:396px;width:60px"></i>
<i class="sm" style="left:806px;top:396px;width:38px"></i>
<i class="sm" style="left:906px;top:396px;width:90px"></i>
<i class="sm" style="left:55px;top:463px;width:42px"></i>
<i class="sm" style="left:55px;top:481px;width:95px"></i>
<i class="sm" style="left:55px;top:530px;width:55px"></i>
<i class="sm" style="left:185px;top:463px;width:80px"></i>
<i class="sm" style="left:185px;top:482px;width:130px"></i>
<i class="sm" style="left:342px;top:465px;width:54px"></i>
<i class="sm" style="left:410px;top:465px;width:150px"></i>
<i class="sm" style="left:708px;top:465px;width:60px"></i>
<i class="sm" style="left:806px;top:465px;width:38px"></i>
<i class="sm" style="left:906px;top:465px;width:90px"></i>
<i class="sm" style="left:342px;top:483px;width:54px"></i>
<i class="sm" style="left:410px;top:483px;width:203px"></i>
<i class="sm" style="left:708px;top:483px;width:60px"></i>
<i class="sm" style="left:806px;top:483px;width:38px"></i>
<i class="sm" style="left:906px;top:483px;width:90px"></i>
<i class="sm" style="left:342px;top:501px;width:54px"></i>
<i class="sm" style="left:410px;top:501px;width:256px"></i>
<i class="sm" style="left:708px;top:501px;width:60px"></i>
<i class="sm" style="left:806px;top:501px;width:38px"></i>
<i class="sm" style="left:906px;top:501px;width:90px"></i>
<i class="sm" style="left:342px;top:519px;width:54px"></i>
<i class="sm" style="left:410px;top:519px;width:189px"></i>
<i class="sm" style="left:708px;top:519px;width:60px"></i>
<i class="sm" style="left:806px;top:519px;width:38px"></i>
<i class="sm" style="left:906px;top:519px;width:90px"></i>
<i class="sm" style="left:55px;top:549px;width:42px"></i>
<i class="sm" style="left:55px;top:567px;width:95px"></i>
<i class="sm" style="left:55px;top:600px;width:55px"></i>
<i class="sm" style="left:185px;top:549px;width:80px"></i>
<i class="sm" style="left:185px;top:568px;width:130px"></i>
<i class="sm" style="left:342px;top:551px;width:54px"></i>
<i class="sm" style="left:410px;top:551px;width:150px"></i>
<i class="sm" style="left:708px;top:551px;width:60px"></i>
<i class="sm" style="left:806px;top:551px;width:38px"></i>
<i class="sm" style="left:906px;top:551px;width:90px"></i>
<i class="sm" style="left:55px;top:619px;width:42px"></i>
<i class="sm" style="left:55px;top:637px;width:95px"></i>
<i class="sm" style="left:55px;top:662px;width:55px"></i>
<i class="sm" style="left:185px;top:619px;width:80px"></i>
<i class="sm" style="left:185px;top:638px;width:130px"></i>
<i class="sm" style="left:342px;top:621px;width:54px"></i>
<i class="sm" style="left:410px;top:621px;width:150px"></i>
<i class="sm" style="left:708px;top:621px;width:60px"></i>
<i class="sm" style="left:806px;top:621px;width:38px"></i>
<i class="sm" style="left:906px;top:621px;width:90px"></i>
<i class="sm" style="left:55px;top:681px;width:42px"></i>
<i class="sm" style="left:55px;top:699px;width:95px"></i>
<i class="sm" style="left:55px;top:728px;width:55px"></i>
<i class="sm" style="left:185px;top:681px;width:80px"></i>
<i class="sm" style="left:185px;top:700px;width:130px"></i>
<i class="sm" style="left:342px;top:683px;width:54px"></i>
<i class="sm" style="left:410px;top:683px;width:150px"></i>
<i class="sm" style="left:708px;top:683px;width:60px"></i>
<i class="sm" style="left:806px;top:683px;width:38px"></i>
<i class="sm" style="left:906px;top:683px;width:90px"></i>
<i class="fbox" style="left:53px;top:749px;width:953px;height:17px"></i>
</div></div>
<div class="tl" style="top:187.0px">2</div>
<div class="th lite" style="top:210.7px"><div class="pg" style="left:0;top:0">
<span class="b" style="left:54.88px;top:51.94px;font-size:21.33px;line-height:21.33px;color:#000;">Jail Census Report</span>
<span style="left:910.4px;top:49.84px;font-size:13.33px;line-height:13.33px;">TXWISEPROD</span>
<span style="left:54.88px;top:81.85px;font-size:10.67px;line-height:10.67px;">Sorted By:</span>
<span style="left:110.4px;top:81.85px;font-size:10.67px;line-height:10.67px;">Inmate Name,</span>
<span style="left:204.32px;top:81.85px;font-size:10.67px;line-height:10.67px;">Hold Reason:</span>
<span style="left:274.4px;top:81.85px;font-size:10.67px;line-height:10.67px;">All</span>
<span style="left:54.88px;top:99.77px;font-size:10.67px;line-height:10.67px;">Nodes:</span>
<span style="left:94.72px;top:99.77px;font-size:10.67px;line-height:10.67px;">Main Jail</span>
<i class="rule" style="left:48.0px;top:112.0px;width:958.4px"></i>
<i class="sm" style="left:55px;top:126px;width:30px"></i>
<i class="sm" style="left:184px;top:126px;width:140px"></i>
<i class="sm" style="left:342px;top:126px;width:50px"></i>
<i class="sm" style="left:414px;top:126px;width:50px"></i>
<i class="sm" style="left:698px;top:126px;width:55px"></i>
<i class="sm" style="left:775px;top:126px;width:90px"></i>
<i class="sm" style="left:895px;top:126px;width:50px"></i>
<i class="sm" style="left:55px;top:144px;width:80px"></i><i class="sm" style="left:184px;top:144px;width:95px"></i>
<i class="sm" style="left:55px;top:162px;width:28px"></i><i class="sm" style="left:55px;top:178px;width:58px"></i>
<i class="band" style="left:48px;top:191px;width:958px;height:73px"></i>
<i class="band" style="left:48px;top:342px;width:958px;height:54px"></i>
<i class="band" style="left:48px;top:575px;width:958px;height:62px"></i>
<i class="sm" style="left:55px;top:195px;width:42px"></i>
<i class="sm" style="left:55px;top:213px;width:95px"></i>
<i class="sm" style="left:55px;top:250px;width:55px"></i>
<i class="sm" style="left:185px;top:195px;width:80px"></i>
<i class="sm" style="left:185px;top:214px;width:130px"></i>
<i class="sm" style="left:342px;top:197px;width:54px"></i>
<i class="sm" style="left:410px;top:197px;width:150px"></i>
<i class="sm" style="left:708px;top:197px;width:60px"></i>
<i class="sm" style="left:806px;top:197px;width:38px"></i>
<i class="sm" style="left:906px;top:197px;width:90px"></i>
<i class="sm" style="left:55px;top:269px;width:42px"></i>
<i class="sm" style="left:55px;top:287px;width:95px"></i>
<i class="sm" style="left:55px;top:328px;width:55px"></i>
<i class="sm" style="left:185px;top:269px;width:80px"></i>
<i class="sm" style="left:185px;top:288px;width:130px"></i>
<i class="sm" style="left:342px;top:271px;width:54px"></i>
<i class="sm" style="left:410px;top:271px;width:150px"></i>
<i class="sm" style="left:708px;top:271px;width:60px"></i>
<i class="sm" style="left:806px;top:271px;width:38px"></i>
<i class="sm" style="left:906px;top:271px;width:90px"></i>
<i class="sm" style="left:55px;top:347px;width:42px"></i>
<i class="sm" style="left:55px;top:365px;width:95px"></i>
<i class="sm" style="left:55px;top:382px;width:55px"></i>
<i class="sm" style="left:185px;top:347px;width:80px"></i>
<i class="sm" style="left:185px;top:366px;width:130px"></i>
<i class="sm" style="left:342px;top:349px;width:54px"></i>
<i class="sm" style="left:410px;top:349px;width:150px"></i>
<i class="sm" style="left:708px;top:349px;width:60px"></i>
<i class="sm" style="left:806px;top:349px;width:38px"></i>
<i class="sm" style="left:906px;top:349px;width:90px"></i>
<i class="sm" style="left:55px;top:401px;width:42px"></i>
<i class="sm" style="left:55px;top:419px;width:95px"></i>
<i class="sm" style="left:55px;top:561px;width:55px"></i>
<i class="sm" style="left:185px;top:401px;width:80px"></i>
<i class="sm" style="left:185px;top:420px;width:130px"></i>
<i class="sm" style="left:342px;top:403px;width:54px"></i>
<i class="sm" style="left:410px;top:403px;width:150px"></i>
<i class="sm" style="left:708px;top:403px;width:60px"></i>
<i class="sm" style="left:806px;top:403px;width:38px"></i>
<i class="sm" style="left:906px;top:403px;width:90px"></i>
<i class="sm" style="left:342px;top:421px;width:54px"></i>
<i class="sm" style="left:410px;top:421px;width:203px"></i>
<i class="sm" style="left:708px;top:421px;width:60px"></i>
<i class="sm" style="left:806px;top:421px;width:38px"></i>
<i class="sm" style="left:906px;top:421px;width:90px"></i>
<i class="sm" style="left:342px;top:439px;width:54px"></i>
<i class="sm" style="left:410px;top:439px;width:256px"></i>
<i class="sm" style="left:708px;top:439px;width:60px"></i>
<i class="sm" style="left:806px;top:439px;width:38px"></i>
<i class="sm" style="left:906px;top:439px;width:90px"></i>
<i class="sm" style="left:342px;top:457px;width:54px"></i>
<i class="sm" style="left:410px;top:457px;width:189px"></i>
<i class="sm" style="left:708px;top:457px;width:60px"></i>
<i class="sm" style="left:806px;top:457px;width:38px"></i>
<i class="sm" style="left:906px;top:457px;width:90px"></i>
<i class="sm" style="left:342px;top:475px;width:54px"></i>
<i class="sm" style="left:410px;top:475px;width:242px"></i>
<i class="sm" style="left:708px;top:475px;width:60px"></i>
<i class="sm" style="left:806px;top:475px;width:38px"></i>
<i class="sm" style="left:906px;top:475px;width:90px"></i>
<i class="sm" style="left:342px;top:493px;width:54px"></i>
<i class="sm" style="left:410px;top:493px;width:175px"></i>
<i class="sm" style="left:708px;top:493px;width:60px"></i>
<i class="sm" style="left:806px;top:493px;width:38px"></i>
<i class="sm" style="left:906px;top:493px;width:90px"></i>
<i class="sm" style="left:342px;top:511px;width:54px"></i>
<i class="sm" style="left:410px;top:511px;width:228px"></i>
<i class="sm" style="left:708px;top:511px;width:60px"></i>
<i class="sm" style="left:806px;top:511px;width:38px"></i>
<i class="sm" style="left:906px;top:511px;width:90px"></i>
<i class="sm" style="left:342px;top:529px;width:54px"></i>
<i class="sm" style="left:410px;top:529px;width:161px"></i>
<i class="sm" style="left:708px;top:529px;width:60px"></i>
<i class="sm" style="left:806px;top:529px;width:38px"></i>
<i class="sm" style="left:906px;top:529px;width:90px"></i>
<i class="sm" style="left:342px;top:547px;width:54px"></i>
<i class="sm" style="left:410px;top:547px;width:214px"></i>
<i class="sm" style="left:708px;top:547px;width:60px"></i>
<i class="sm" style="left:806px;top:547px;width:38px"></i>
<i class="sm" style="left:906px;top:547px;width:90px"></i>
<i class="sm" style="left:55px;top:580px;width:42px"></i>
<i class="sm" style="left:55px;top:598px;width:95px"></i>
<i class="sm" style="left:55px;top:623px;width:55px"></i>
<i class="sm" style="left:185px;top:580px;width:80px"></i>
<i class="sm" style="left:185px;top:599px;width:130px"></i>
<i class="sm" style="left:342px;top:582px;width:54px"></i>
<i class="sm" style="left:410px;top:582px;width:150px"></i>
<i class="sm" style="left:708px;top:582px;width:60px"></i>
<i class="sm" style="left:806px;top:582px;width:38px"></i>
<i class="sm" style="left:906px;top:582px;width:90px"></i>
<i class="sm" style="left:55px;top:642px;width:42px"></i>
<i class="sm" style="left:55px;top:660px;width:95px"></i>
<i class="sm" style="left:55px;top:728px;width:55px"></i>
<i class="sm" style="left:185px;top:642px;width:80px"></i>
<i class="sm" style="left:185px;top:661px;width:130px"></i>
<i class="sm" style="left:342px;top:644px;width:54px"></i>
<i class="sm" style="left:410px;top:644px;width:150px"></i>
<i class="sm" style="left:708px;top:644px;width:60px"></i>
<i class="sm" style="left:806px;top:644px;width:38px"></i>
<i class="sm" style="left:906px;top:644px;width:90px"></i>
<i class="sm" style="left:342px;top:662px;width:54px"></i>
<i class="sm" style="left:410px;top:662px;width:203px"></i>
<i class="sm" style="left:708px;top:662px;width:60px"></i>
<i class="sm" style="left:806px;top:662px;width:38px"></i>
<i class="sm" style="left:906px;top:662px;width:90px"></i>
<i class="sm" style="left:342px;top:680px;width:54px"></i>
<i class="sm" style="left:410px;top:680px;width:256px"></i>
<i class="sm" style="left:708px;top:680px;width:60px"></i>
<i class="sm" style="left:806px;top:680px;width:38px"></i>
<i class="sm" style="left:906px;top:680px;width:90px"></i>
<i class="sm" style="left:342px;top:698px;width:54px"></i>
<i class="sm" style="left:410px;top:698px;width:189px"></i>
<i class="sm" style="left:708px;top:698px;width:60px"></i>
<i class="sm" style="left:806px;top:698px;width:38px"></i>
<i class="sm" style="left:906px;top:698px;width:90px"></i>
<i class="sm" style="left:342px;top:716px;width:54px"></i>
<i class="sm" style="left:410px;top:716px;width:242px"></i>
<i class="sm" style="left:708px;top:716px;width:60px"></i>
<i class="sm" style="left:806px;top:716px;width:38px"></i>
<i class="sm" style="left:906px;top:716px;width:90px"></i>
<i class="fbox" style="left:53px;top:749px;width:953px;height:17px"></i>
</div></div>
<div class="tl" style="top:285.0px">3</div>
<div class="th lite" style="top:308.7px"><div class="pg" style="left:0;top:0">
<span class="b" style="left:54.88px;top:51.94px;font-size:21.33px;line-height:21.33px;color:#000;">Jail Census Report</span>
<span style="left:910.4px;top:49.84px;font-size:13.33px;line-height:13.33px;">TXWISEPROD</span>
<span style="left:54.88px;top:81.85px;font-size:10.67px;line-height:10.67px;">Sorted By:</span>
<span style="left:110.4px;top:81.85px;font-size:10.67px;line-height:10.67px;">Inmate Name,</span>
<span style="left:204.32px;top:81.85px;font-size:10.67px;line-height:10.67px;">Hold Reason:</span>
<span style="left:274.4px;top:81.85px;font-size:10.67px;line-height:10.67px;">All</span>
<span style="left:54.88px;top:99.77px;font-size:10.67px;line-height:10.67px;">Nodes:</span>
<span style="left:94.72px;top:99.77px;font-size:10.67px;line-height:10.67px;">Main Jail</span>
<i class="rule" style="left:48.0px;top:112.0px;width:958.4px"></i>
<i class="sm" style="left:55px;top:126px;width:30px"></i>
<i class="sm" style="left:184px;top:126px;width:140px"></i>
<i class="sm" style="left:342px;top:126px;width:50px"></i>
<i class="sm" style="left:414px;top:126px;width:50px"></i>
<i class="sm" style="left:698px;top:126px;width:55px"></i>
<i class="sm" style="left:775px;top:126px;width:90px"></i>
<i class="sm" style="left:895px;top:126px;width:50px"></i>
<i class="sm" style="left:55px;top:144px;width:80px"></i><i class="sm" style="left:184px;top:144px;width:95px"></i>
<i class="sm" style="left:55px;top:162px;width:28px"></i><i class="sm" style="left:55px;top:178px;width:58px"></i>
<i class="band" style="left:48px;top:191px;width:958px;height:61px"></i>
<i class="band" style="left:48px;top:420px;width:958px;height:85px"></i>
<i class="band" style="left:48px;top:580px;width:958px;height:62px"></i>
<i class="sm" style="left:55px;top:195px;width:42px"></i>
<i class="sm" style="left:55px;top:213px;width:95px"></i>
<i class="sm" style="left:55px;top:238px;width:55px"></i>
<i class="sm" style="left:185px;top:195px;width:80px"></i>
<i class="sm" style="left:185px;top:214px;width:130px"></i>
<i class="sm" style="left:342px;top:197px;width:54px"></i>
<i class="sm" style="left:410px;top:197px;width:150px"></i>
<i class="sm" style="left:708px;top:197px;width:60px"></i>
<i class="sm" style="left:806px;top:197px;width:38px"></i>
<i class="sm" style="left:906px;top:197px;width:90px"></i>
<i class="sm" style="left:55px;top:257px;width:42px"></i>
<i class="sm" style="left:55px;top:275px;width:95px"></i>
<i class="sm" style="left:55px;top:406px;width:55px"></i>
<i class="sm" style="left:185px;top:257px;width:80px"></i>
<i class="sm" style="left:185px;top:276px;width:130px"></i>
<i class="sm" style="left:342px;top:259px;width:54px"></i>
<i class="sm" style="left:410px;top:259px;width:150px"></i>
<i class="sm" style="left:708px;top:259px;width:60px"></i>
<i class="sm" style="left:806px;top:259px;width:38px"></i>
<i class="sm" style="left:906px;top:259px;width:90px"></i>
<i class="sm" style="left:342px;top:277px;width:54px"></i>
<i class="sm" style="left:410px;top:277px;width:203px"></i>
<i class="sm" style="left:708px;top:277px;width:60px"></i>
<i class="sm" style="left:806px;top:277px;width:38px"></i>
<i class="sm" style="left:906px;top:277px;width:90px"></i>
<i class="sm" style="left:342px;top:295px;width:54px"></i>
<i class="sm" style="left:410px;top:295px;width:256px"></i>
<i class="sm" style="left:708px;top:295px;width:60px"></i>
<i class="sm" style="left:806px;top:295px;width:38px"></i>
<i class="sm" style="left:906px;top:295px;width:90px"></i>
<i class="sm" style="left:342px;top:313px;width:54px"></i>
<i class="sm" style="left:410px;top:313px;width:189px"></i>
<i class="sm" style="left:708px;top:313px;width:60px"></i>
<i class="sm" style="left:806px;top:313px;width:38px"></i>
<i class="sm" style="left:906px;top:313px;width:90px"></i>
<i class="sm" style="left:342px;top:331px;width:54px"></i>
<i class="sm" style="left:410px;top:331px;width:242px"></i>
<i class="sm" style="left:708px;top:331px;width:60px"></i>
<i class="sm" style="left:806px;top:331px;width:38px"></i>
<i class="sm" style="left:906px;top:331px;width:90px"></i>
<i class="sm" style="left:342px;top:349px;width:54px"></i>
<i class="sm" style="left:410px;top:349px;width:175px"></i>
<i class="sm" style="left:708px;top:349px;width:60px"></i>
<i class="sm" style="left:806px;top:349px;width:38px"></i>
<i class="sm" style="left:906px;top:349px;width:90px"></i>
<i class="sm" style="left:342px;top:367px;width:54px"></i>
<i class="sm" style="left:410px;top:367px;width:228px"></i>
<i class="sm" style="left:708px;top:367px;width:60px"></i>
<i class="sm" style="left:806px;top:367px;width:38px"></i>
<i class="sm" style="left:906px;top:367px;width:90px"></i>
<i class="sm" style="left:342px;top:385px;width:54px"></i>
<i class="sm" style="left:410px;top:385px;width:161px"></i>
<i class="sm" style="left:708px;top:385px;width:60px"></i>
<i class="sm" style="left:806px;top:385px;width:38px"></i>
<i class="sm" style="left:906px;top:385px;width:90px"></i>
<i class="sm" style="left:342px;top:403px;width:54px"></i>
<i class="sm" style="left:410px;top:403px;width:214px"></i>
<i class="sm" style="left:708px;top:403px;width:60px"></i>
<i class="sm" style="left:806px;top:403px;width:38px"></i>
<i class="sm" style="left:906px;top:403px;width:90px"></i>
<i class="sm" style="left:55px;top:425px;width:42px"></i>
<i class="sm" style="left:55px;top:443px;width:95px"></i>
<i class="sm" style="left:55px;top:491px;width:55px"></i>
<i class="sm" style="left:185px;top:425px;width:80px"></i>
<i class="sm" style="left:185px;top:444px;width:130px"></i>
<i class="sm" style="left:342px;top:427px;width:54px"></i>
<i class="sm" style="left:410px;top:427px;width:150px"></i>
<i class="sm" style="left:708px;top:427px;width:60px"></i>
<i class="sm" style="left:806px;top:427px;width:38px"></i>
<i class="sm" style="left:906px;top:427px;width:90px"></i>
<i class="sm" style="left:342px;top:445px;width:54px"></i>
<i class="sm" style="left:410px;top:445px;width:203px"></i>
<i class="sm" style="left:708px;top:445px;width:60px"></i>
<i class="sm" style="left:806px;top:445px;width:38px"></i>
<i class="sm" style="left:906px;top:445px;width:90px"></i>
<i class="sm" style="left:342px;top:463px;width:54px"></i>
<i class="sm" style="left:410px;top:463px;width:256px"></i>
<i class="sm" style="left:708px;top:463px;width:60px"></i>
<i class="sm" style="left:806px;top:463px;width:38px"></i>
<i class="sm" style="left:906px;top:463px;width:90px"></i>
<i class="sm" style="left:342px;top:481px;width:54px"></i>
<i class="sm" style="left:410px;top:481px;width:189px"></i>
<i class="sm" style="left:708px;top:481px;width:60px"></i>
<i class="sm" style="left:806px;top:481px;width:38px"></i>
<i class="sm" style="left:906px;top:481px;width:90px"></i>
<i class="sm" style="left:55px;top:510px;width:42px"></i>
<i class="sm" style="left:55px;top:528px;width:95px"></i>
<i class="sm" style="left:55px;top:566px;width:55px"></i>
<i class="sm" style="left:185px;top:510px;width:80px"></i>
<i class="sm" style="left:185px;top:529px;width:130px"></i>
<i class="sm" style="left:342px;top:512px;width:54px"></i>
<i class="sm" style="left:410px;top:512px;width:150px"></i>
<i class="sm" style="left:708px;top:512px;width:60px"></i>
<i class="sm" style="left:806px;top:512px;width:38px"></i>
<i class="sm" style="left:906px;top:512px;width:90px"></i>
<i class="sm" style="left:55px;top:585px;width:42px"></i>
<i class="sm" style="left:55px;top:603px;width:95px"></i>
<i class="sm" style="left:55px;top:628px;width:55px"></i>
<i class="sm" style="left:185px;top:585px;width:80px"></i>
<i class="sm" style="left:185px;top:604px;width:130px"></i>
<i class="sm" style="left:342px;top:587px;width:54px"></i>
<i class="sm" style="left:410px;top:587px;width:150px"></i>
<i class="sm" style="left:708px;top:587px;width:60px"></i>
<i class="sm" style="left:806px;top:587px;width:38px"></i>
<i class="sm" style="left:906px;top:587px;width:90px"></i>
<i class="sm" style="left:55px;top:647px;width:42px"></i>
<i class="sm" style="left:55px;top:665px;width:95px"></i>
<i class="sm" style="left:55px;top:728px;width:55px"></i>
<i class="sm" style="left:185px;top:647px;width:80px"></i>
<i class="sm" style="left:185px;top:666px;width:130px"></i>
<i class="sm" style="left:342px;top:649px;width:54px"></i>
<i class="sm" style="left:410px;top:649px;width:150px"></i>
<i class="sm" style="left:708px;top:649px;width:60px"></i>
<i class="sm" style="left:806px;top:649px;width:38px"></i>
<i class="sm" style="left:906px;top:649px;width:90px"></i>
<i class="sm" style="left:342px;top:667px;width:54px"></i>
<i class="sm" style="left:410px;top:667px;width:203px"></i>
<i class="sm" style="left:708px;top:667px;width:60px"></i>
<i class="sm" style="left:806px;top:667px;width:38px"></i>
<i class="sm" style="left:906px;top:667px;width:90px"></i>
<i class="sm" style="left:342px;top:685px;width:54px"></i>
<i class="sm" style="left:410px;top:685px;width:256px"></i>
<i class="sm" style="left:708px;top:685px;width:60px"></i>
<i class="sm" style="left:806px;top:685px;width:38px"></i>
<i class="sm" style="left:906px;top:685px;width:90px"></i>
<i class="sm" style="left:342px;top:703px;width:54px"></i>
<i class="sm" style="left:410px;top:703px;width:189px"></i>
<i class="sm" style="left:708px;top:703px;width:60px"></i>
<i class="sm" style="left:806px;top:703px;width:38px"></i>
<i class="sm" style="left:906px;top:703px;width:90px"></i>
<i class="sm" style="left:342px;top:721px;width:54px"></i>
<i class="sm" style="left:410px;top:721px;width:242px"></i>
<i class="sm" style="left:708px;top:721px;width:60px"></i>
<i class="sm" style="left:806px;top:721px;width:38px"></i>
<i class="sm" style="left:906px;top:721px;width:90px"></i>
<i class="fbox" style="left:53px;top:749px;width:953px;height:17px"></i>
</div></div>
<div class="tl" style="top:383.0px">4</div>
<div class="th lite" style="top:406.7px"><div class="pg" style="left:0;top:0">
<span class="b" style="left:54.88px;top:51.94px;font-size:21.33px;line-height:21.33px;color:#000;">Jail Census Report</span>
<span style="left:910.4px;top:49.84px;font-size:13.33px;line-height:13.33px;">TXWISEPROD</span>
<span style="left:54.88px;top:81.85px;font-size:10.67px;line-height:10.67px;">Sorted By:</span>
<span style="left:110.4px;top:81.85px;font-size:10.67px;line-height:10.67px;">Inmate Name,</span>
<span style="left:204.32px;top:81.85px;font-size:10.67px;line-height:10.67px;">Hold Reason:</span>
<span style="left:274.4px;top:81.85px;font-size:10.67px;line-height:10.67px;">All</span>
<span style="left:54.88px;top:99.77px;font-size:10.67px;line-height:10.67px;">Nodes:</span>
<span style="left:94.72px;top:99.77px;font-size:10.67px;line-height:10.67px;">Main Jail</span>
<i class="rule" style="left:48.0px;top:112.0px;width:958.4px"></i>
<i class="sm" style="left:55px;top:126px;width:30px"></i>
<i class="sm" style="left:184px;top:126px;width:140px"></i>
<i class="sm" style="left:342px;top:126px;width:50px"></i>
<i class="sm" style="left:414px;top:126px;width:50px"></i>
<i class="sm" style="left:698px;top:126px;width:55px"></i>
<i class="sm" style="left:775px;top:126px;width:90px"></i>
<i class="sm" style="left:895px;top:126px;width:50px"></i>
<i class="sm" style="left:55px;top:144px;width:80px"></i><i class="sm" style="left:184px;top:144px;width:95px"></i>
<i class="sm" style="left:55px;top:162px;width:28px"></i><i class="sm" style="left:55px;top:178px;width:58px"></i>
<i class="band" style="left:48px;top:194px;width:958px;height:59px"></i>
<i class="band" style="left:48px;top:331px;width:958px;height:58px"></i>
<i class="band" style="left:48px;top:462px;width:958px;height:66px"></i>
<i class="band" style="left:48px;top:595px;width:958px;height:94px"></i>
<i class="sm" style="left:55px;top:195px;width:42px"></i>
<i class="sm" style="left:55px;top:213px;width:95px"></i>
<i class="sm" style="left:55px;top:239px;width:55px"></i>
<i class="sm" style="left:185px;top:195px;width:80px"></i>
<i class="sm" style="left:185px;top:214px;width:130px"></i>
<i class="sm" style="left:342px;top:197px;width:54px"></i>
<i class="sm" style="left:410px;top:197px;width:150px"></i>
<i class="sm" style="left:708px;top:197px;width:60px"></i>
<i class="sm" style="left:806px;top:197px;width:38px"></i>
<i class="sm" style="left:906px;top:197px;width:90px"></i>
<i class="sm" style="left:55px;top:258px;width:42px"></i>
<i class="sm" style="left:55px;top:276px;width:95px"></i>
<i class="sm" style="left:55px;top:317px;width:55px"></i>
<i class="sm" style="left:185px;top:258px;width:80px"></i>
<i class="sm" style="left:185px;top:277px;width:130px"></i>
<i class="sm" style="left:342px;top:260px;width:54px"></i>
<i class="sm" style="left:410px;top:260px;width:150px"></i>
<i class="sm" style="left:708px;top:260px;width:60px"></i>
<i class="sm" style="left:806px;top:260px;width:38px"></i>
<i class="sm" style="left:906px;top:260px;width:90px"></i>
<i class="sm" style="left:55px;top:336px;width:42px"></i>
<i class="sm" style="left:55px;top:354px;width:95px"></i>
<i class="sm" style="left:55px;top:375px;width:55px"></i>
<i class="sm" style="left:185px;top:336px;width:80px"></i>
<i class="sm" style="left:185px;top:355px;width:130px"></i>
<i class="sm" style="left:342px;top:338px;width:54px"></i>
<i class="sm" style="left:410px;top:338px;width:150px"></i>
<i class="sm" style="left:708px;top:338px;width:60px"></i>
<i class="sm" style="left:806px;top:338px;width:38px"></i>
<i class="sm" style="left:906px;top:338px;width:90px"></i>
<i class="sm" style="left:55px;top:394px;width:42px"></i>
<i class="sm" style="left:55px;top:412px;width:95px"></i>
<i class="sm" style="left:55px;top:448px;width:55px"></i>
<i class="sm" style="left:185px;top:394px;width:80px"></i>
<i class="sm" style="left:185px;top:413px;width:130px"></i>
<i class="sm" style="left:342px;top:396px;width:54px"></i>
<i class="sm" style="left:410px;top:396px;width:150px"></i>
<i class="sm" style="left:708px;top:396px;width:60px"></i>
<i class="sm" style="left:806px;top:396px;width:38px"></i>
<i class="sm" style="left:906px;top:396px;width:90px"></i>
<i class="sm" style="left:55px;top:467px;width:42px"></i>
<i class="sm" style="left:55px;top:485px;width:95px"></i>
<i class="sm" style="left:55px;top:514px;width:55px"></i>
<i class="sm" style="left:185px;top:467px;width:80px"></i>
<i class="sm" style="left:185px;top:486px;width:130px"></i>
<i class="sm" style="left:342px;top:469px;width:54px"></i>
<i class="sm" style="left:410px;top:469px;width:150px"></i>
<i class="sm" style="left:708px;top:469px;width:60px"></i>
<i class="sm" style="left:806px;top:469px;width:38px"></i>
<i class="sm" style="left:906px;top:469px;width:90px"></i>
<i class="sm" style="left:55px;top:533px;width:42px"></i>
<i class="sm" style="left:55px;top:551px;width:95px"></i>
<i class="sm" style="left:55px;top:581px;width:55px"></i>
<i class="sm" style="left:185px;top:533px;width:80px"></i>
<i class="sm" style="left:185px;top:552px;width:130px"></i>
<i class="sm" style="left:342px;top:535px;width:54px"></i>
<i class="sm" style="left:410px;top:535px;width:150px"></i>
<i class="sm" style="left:708px;top:535px;width:60px"></i>
<i class="sm" style="left:806px;top:535px;width:38px"></i>
<i class="sm" style="left:906px;top:535px;width:90px"></i>
<i class="sm" style="left:55px;top:600px;width:42px"></i>
<i class="sm" style="left:55px;top:618px;width:95px"></i>
<i class="sm" style="left:55px;top:675px;width:55px"></i>
<i class="sm" style="left:185px;top:600px;width:80px"></i>
<i class="sm" style="left:185px;top:619px;width:130px"></i>
<i class="sm" style="left:342px;top:602px;width:54px"></i>
<i class="sm" style="left:410px;top:602px;width:150px"></i>
<i class="sm" style="left:708px;top:602px;width:60px"></i>
<i class="sm" style="left:806px;top:602px;width:38px"></i>
<i class="sm" style="left:906px;top:602px;width:90px"></i>
<i class="sm" style="left:342px;top:620px;width:54px"></i>
<i class="sm" style="left:410px;top:620px;width:203px"></i>
<i class="sm" style="left:708px;top:620px;width:60px"></i>
<i class="sm" style="left:806px;top:620px;width:38px"></i>
<i class="sm" style="left:906px;top:620px;width:90px"></i>
<i class="sm" style="left:342px;top:638px;width:54px"></i>
<i class="sm" style="left:410px;top:638px;width:256px"></i>
<i class="sm" style="left:708px;top:638px;width:60px"></i>
<i class="sm" style="left:806px;top:638px;width:38px"></i>
<i class="sm" style="left:906px;top:638px;width:90px"></i>
<i class="sm" style="left:342px;top:656px;width:54px"></i>
<i class="sm" style="left:410px;top:656px;width:189px"></i>
<i class="sm" style="left:708px;top:656px;width:60px"></i>
<i class="sm" style="left:806px;top:656px;width:38px"></i>
<i class="sm" style="left:906px;top:656px;width:90px"></i>
<i class="sm" style="left:342px;top:674px;width:54px"></i>
<i class="sm" style="left:410px;top:674px;width:242px"></i>
<i class="sm" style="left:708px;top:674px;width:60px"></i>
<i class="sm" style="left:806px;top:674px;width:38px"></i>
<i class="sm" style="left:906px;top:674px;width:90px"></i>
<i class="sm" style="left:55px;top:694px;width:42px"></i>
<i class="sm" style="left:55px;top:712px;width:95px"></i>
<i class="sm" style="left:55px;top:728px;width:55px"></i>
<i class="sm" style="left:185px;top:694px;width:80px"></i>
<i class="sm" style="left:185px;top:713px;width:130px"></i>
<i class="sm" style="left:342px;top:696px;width:54px"></i>
<i class="sm" style="left:410px;top:696px;width:150px"></i>
<i class="sm" style="left:708px;top:696px;width:60px"></i>
<i class="sm" style="left:806px;top:696px;width:38px"></i>
<i class="sm" style="left:906px;top:696px;width:90px"></i>
<i class="fbox" style="left:53px;top:749px;width:953px;height:17px"></i>
</div></div>
<div class="tl" style="top:481.0px">5</div>
<div class="th lite" style="top:504.70000000000005px"><div class="pg" style="left:0;top:0">
<span class="b" style="left:54.88px;top:51.94px;font-size:21.33px;line-height:21.33px;color:#000;">Jail Census Report</span>
<span style="left:910.4px;top:49.84px;font-size:13.33px;line-height:13.33px;">TXWISEPROD</span>
<span style="left:54.88px;top:81.85px;font-size:10.67px;line-height:10.67px;">Sorted By:</span>
<span style="left:110.4px;top:81.85px;font-size:10.67px;line-height:10.67px;">Inmate Name,</span>
<span style="left:204.32px;top:81.85px;font-size:10.67px;line-height:10.67px;">Hold Reason:</span>
<span style="left:274.4px;top:81.85px;font-size:10.67px;line-height:10.67px;">All</span>
<span style="left:54.88px;top:99.77px;font-size:10.67px;line-height:10.67px;">Nodes:</span>
<span style="left:94.72px;top:99.77px;font-size:10.67px;line-height:10.67px;">Main Jail</span>
<i class="rule" style="left:48.0px;top:112.0px;width:958.4px"></i>
<i class="sm" style="left:55px;top:126px;width:30px"></i>
<i class="sm" style="left:184px;top:126px;width:140px"></i>
<i class="sm" style="left:342px;top:126px;width:50px"></i>
<i class="sm" style="left:414px;top:126px;width:50px"></i>
<i class="sm" style="left:698px;top:126px;width:55px"></i>
<i class="sm" style="left:775px;top:126px;width:90px"></i>
<i class="sm" style="left:895px;top:126px;width:50px"></i>
<i class="sm" style="left:55px;top:144px;width:80px"></i><i class="sm" style="left:184px;top:144px;width:95px"></i>
<i class="sm" style="left:55px;top:162px;width:28px"></i><i class="sm" style="left:55px;top:178px;width:58px"></i>
<i class="band" style="left:48px;top:188px;width:958px;height:122px"></i>
<i class="band" style="left:48px;top:410px;width:958px;height:56px"></i>
<i class="band" style="left:48px;top:530px;width:958px;height:136px"></i>
<i class="sm" style="left:55px;top:195px;width:42px"></i>
<i class="sm" style="left:55px;top:213px;width:95px"></i>
<i class="sm" style="left:55px;top:296px;width:55px"></i>
<i class="sm" style="left:185px;top:195px;width:80px"></i>
<i class="sm" style="left:185px;top:214px;width:130px"></i>
<i class="sm" style="left:342px;top:197px;width:54px"></i>
<i class="sm" style="left:410px;top:197px;width:150px"></i>
<i class="sm" style="left:708px;top:197px;width:60px"></i>
<i class="sm" style="left:806px;top:197px;width:38px"></i>
<i class="sm" style="left:906px;top:197px;width:90px"></i>
<i class="sm" style="left:342px;top:215px;width:54px"></i>
<i class="sm" style="left:410px;top:215px;width:203px"></i>
<i class="sm" style="left:708px;top:215px;width:60px"></i>
<i class="sm" style="left:806px;top:215px;width:38px"></i>
<i class="sm" style="left:906px;top:215px;width:90px"></i>
<i class="sm" style="left:342px;top:233px;width:54px"></i>
<i class="sm" style="left:410px;top:233px;width:256px"></i>
<i class="sm" style="left:708px;top:233px;width:60px"></i>
<i class="sm" style="left:806px;top:233px;width:38px"></i>
<i class="sm" style="left:906px;top:233px;width:90px"></i>
<i class="sm" style="left:342px;top:251px;width:54px"></i>
<i class="sm" style="left:410px;top:251px;width:189px"></i>
<i class="sm" style="left:708px;top:251px;width:60px"></i>
<i class="sm" style="left:806px;top:251px;width:38px"></i>
<i class="sm" style="left:906px;top:251px;width:90px"></i>
<i class="sm" style="left:342px;top:269px;width:54px"></i>
<i class="sm" style="left:410px;top:269px;width:242px"></i>
<i class="sm" style="left:708px;top:269px;width:60px"></i>
<i class="sm" style="left:806px;top:269px;width:38px"></i>
<i class="sm" style="left:906px;top:269px;width:90px"></i>
<i class="sm" style="left:342px;top:287px;width:54px"></i>
<i class="sm" style="left:410px;top:287px;width:175px"></i>
<i class="sm" style="left:708px;top:287px;width:60px"></i>
<i class="sm" style="left:806px;top:287px;width:38px"></i>
<i class="sm" style="left:906px;top:287px;width:90px"></i>
<i class="sm" style="left:55px;top:315px;width:42px"></i>
<i class="sm" style="left:55px;top:333px;width:95px"></i>
<i class="sm" style="left:55px;top:396px;width:55px"></i>
<i class="sm" style="left:185px;top:315px;width:80px"></i>
<i class="sm" style="left:185px;top:334px;width:130px"></i>
<i class="sm" style="left:342px;top:317px;width:54px"></i>
<i class="sm" style="left:410px;top:317px;width:150px"></i>
<i class="sm" style="left:708px;top:317px;width:60px"></i>
<i class="sm" style="left:806px;top:317px;width:38px"></i>
<i class="sm" style="left:906px;top:317px;width:90px"></i>
<i class="sm" style="left:342px;top:335px;width:54px"></i>
<i class="sm" style="left:410px;top:335px;width:203px"></i>
<i class="sm" style="left:708px;top:335px;width:60px"></i>
<i class="sm" style="left:806px;top:335px;width:38px"></i>
<i class="sm" style="left:906px;top:335px;width:90px"></i>
<i class="sm" style="left:342px;top:353px;width:54px"></i>
<i class="sm" style="left:410px;top:353px;width:256px"></i>
<i class="sm" style="left:708px;top:353px;width:60px"></i>
<i class="sm" style="left:806px;top:353px;width:38px"></i>
<i class="sm" style="left:906px;top:353px;width:90px"></i>
<i class="sm" style="left:342px;top:371px;width:54px"></i>
<i class="sm" style="left:410px;top:371px;width:189px"></i>
<i class="sm" style="left:708px;top:371px;width:60px"></i>
<i class="sm" style="left:806px;top:371px;width:38px"></i>
<i class="sm" style="left:906px;top:371px;width:90px"></i>
<i class="sm" style="left:342px;top:389px;width:54px"></i>
<i class="sm" style="left:410px;top:389px;width:242px"></i>
<i class="sm" style="left:708px;top:389px;width:60px"></i>
<i class="sm" style="left:806px;top:389px;width:38px"></i>
<i class="sm" style="left:906px;top:389px;width:90px"></i>
<i class="sm" style="left:55px;top:415px;width:42px"></i>
<i class="sm" style="left:55px;top:433px;width:95px"></i>
<i class="sm" style="left:55px;top:452px;width:55px"></i>
<i class="sm" style="left:185px;top:415px;width:80px"></i>
<i class="sm" style="left:185px;top:434px;width:130px"></i>
<i class="sm" style="left:342px;top:417px;width:54px"></i>
<i class="sm" style="left:410px;top:417px;width:150px"></i>
<i class="sm" style="left:708px;top:417px;width:60px"></i>
<i class="sm" style="left:806px;top:417px;width:38px"></i>
<i class="sm" style="left:906px;top:417px;width:90px"></i>
<i class="sm" style="left:55px;top:471px;width:42px"></i>
<i class="sm" style="left:55px;top:489px;width:95px"></i>
<i class="sm" style="left:55px;top:516px;width:55px"></i>
<i class="sm" style="left:185px;top:471px;width:80px"></i>
<i class="sm" style="left:185px;top:490px;width:130px"></i>
<i class="sm" style="left:342px;top:473px;width:54px"></i>
<i class="sm" style="left:410px;top:473px;width:150px"></i>
<i class="sm" style="left:708px;top:473px;width:60px"></i>
<i class="sm" style="left:806px;top:473px;width:38px"></i>
<i class="sm" style="left:906px;top:473px;width:90px"></i>
<i class="sm" style="left:55px;top:535px;width:42px"></i>
<i class="sm" style="left:55px;top:553px;width:95px"></i>
<i class="sm" style="left:55px;top:652px;width:55px"></i>
<i class="sm" style="left:185px;top:535px;width:80px"></i>
<i class="sm" style="left:185px;top:554px;width:130px"></i>
<i class="sm" style="left:342px;top:537px;width:54px"></i>
<i class="sm" style="left:410px;top:537px;width:150px"></i>
<i class="sm" style="left:708px;top:537px;width:60px"></i>
<i class="sm" style="left:806px;top:537px;width:38px"></i>
<i class="sm" style="left:906px;top:537px;width:90px"></i>
<i class="sm" style="left:342px;top:555px;width:54px"></i>
<i class="sm" style="left:410px;top:555px;width:203px"></i>
<i class="sm" style="left:708px;top:555px;width:60px"></i>
<i class="sm" style="left:806px;top:555px;width:38px"></i>
<i class="sm" style="left:906px;top:555px;width:90px"></i>
<i class="sm" style="left:342px;top:573px;width:54px"></i>
<i class="sm" style="left:410px;top:573px;width:256px"></i>
<i class="sm" style="left:708px;top:573px;width:60px"></i>
<i class="sm" style="left:806px;top:573px;width:38px"></i>
<i class="sm" style="left:906px;top:573px;width:90px"></i>
<i class="sm" style="left:342px;top:591px;width:54px"></i>
<i class="sm" style="left:410px;top:591px;width:189px"></i>
<i class="sm" style="left:708px;top:591px;width:60px"></i>
<i class="sm" style="left:806px;top:591px;width:38px"></i>
<i class="sm" style="left:906px;top:591px;width:90px"></i>
<i class="sm" style="left:342px;top:609px;width:54px"></i>
<i class="sm" style="left:410px;top:609px;width:242px"></i>
<i class="sm" style="left:708px;top:609px;width:60px"></i>
<i class="sm" style="left:806px;top:609px;width:38px"></i>
<i class="sm" style="left:906px;top:609px;width:90px"></i>
<i class="sm" style="left:342px;top:627px;width:54px"></i>
<i class="sm" style="left:410px;top:627px;width:175px"></i>
<i class="sm" style="left:708px;top:627px;width:60px"></i>
<i class="sm" style="left:806px;top:627px;width:38px"></i>
<i class="sm" style="left:906px;top:627px;width:90px"></i>
<i class="sm" style="left:342px;top:645px;width:54px"></i>
<i class="sm" style="left:410px;top:645px;width:228px"></i>
<i class="sm" style="left:708px;top:645px;width:60px"></i>
<i class="sm" style="left:806px;top:645px;width:38px"></i>
<i class="sm" style="left:906px;top:645px;width:90px"></i>
<i class="sm" style="left:55px;top:671px;width:42px"></i>
<i class="sm" style="left:55px;top:689px;width:95px"></i>
<i class="sm" style="left:55px;top:728px;width:55px"></i>
<i class="sm" style="left:185px;top:671px;width:80px"></i>
<i class="sm" style="left:185px;top:690px;width:130px"></i>
<i class="sm" style="left:342px;top:673px;width:54px"></i>
<i class="sm" style="left:410px;top:673px;width:150px"></i>
<i class="sm" style="left:708px;top:673px;width:60px"></i>
<i class="sm" style="left:806px;top:673px;width:38px"></i>
<i class="sm" style="left:906px;top:673px;width:90px"></i>
<i class="fbox" style="left:53px;top:749px;width:953px;height:17px"></i>
</div></div>
<div class="tl" style="top:579.0px">6</div>
</div>
<div class="sb" style="left:178px"><i class="up"></i><b style="top:10.8px;height:116.2px"></b><i class="dn"></i></div>
<div class="sb" style="left:1190.5px;width:9.5px;box-shadow:-1px 0 2px rgba(0,0,0,.22)"><i class="up" style="left:2px"></i><b style="top:11px;height:24.2px;left:2.1px"></b><i class="dn" style="left:2px"></i></div>
<div id="tb">
<svg style="left:14.8px;top:13.2px" width="11" height="9" viewBox="0 0 11 9"><path d="M0 0.8h10.4M0 4.3h10.4M0 7.8h10.4" stroke="#fff" stroke-width="1.25" fill="none"/></svg>
<span style="left:40px;top:12.1px;font-size:8.1px;line-height:11px;font-weight:bold;white-space:nowrap">jailroster.pdf</span>
<i style="left:513.7px;top:11.3px;width:15px;height:12px;background:#1b1d1f"></i>
<span style="left:513.7px;top:12.2px;width:15px;text-align:center;font-size:8.2px;line-height:12px">1</span>
<span style="left:531.3px;top:12.2px;font-size:8.3px;line-height:12px;white-space:nowrap;letter-spacing:.25px">/ 26</span>
<i style="left:559.2px;top:13.3px;width:0.7px;height:9.4px;background:rgba(255,255,255,.3)"></i>
<i style="left:568.7px;top:16.7px;width:7.6px;height:1.1px;background:#fff"></i>
<i style="left:585px;top:11.3px;width:28px;height:12px;background:#1b1d1f"></i>
<span style="left:585px;top:12.2px;width:28px;text-align:center;font-size:7.9px;line-height:12px">100%</span>
<i style="left:622px;top:17.2px;width:7.4px;height:1.1px;background:#fff"></i>
<i style="left:625.15px;top:14.05px;width:1.1px;height:7.4px;background:#fff"></i>
<i style="left:638px;top:13.3px;width:0.7px;height:9.4px;background:rgba(255,255,255,.3)"></i>
<svg style="left:650.2px;top:12.5px" width="11.8" height="9.5" viewBox="0 0 11.8 9.5"><rect x="0.65" y="0.65" width="10.5" height="8.2" rx="0.7" fill="none" stroke="#fff" stroke-width="1.3"/><path d="M5.9 1.900l1.700 1.800h-3.400zM5.900 7.600l1.700-1.800h-3.400z" fill="#fff"/></svg>
<svg style="left:670px;top:11.2px" width="12.5" height="12.5" viewBox="0 0 24 24"><path d="M7.34 6.41L.86 12.9l6.49 6.48 6.49-6.48-6.5-6.49zM3.69 12.9l3.66-3.66L11 12.9l-3.66 3.66-3.65-3.66zm15.67-6.26C17.61 4.88 15.3 4 13 4V.76L8.76 5 13 9.24V6c1.79 0 3.58.68 4.95 2.05 2.73 2.73 2.73 7.17 0 9.9C16.58 19.32 14.79 20 13 20c-.97 0-1.940-.21-2.84-.61l-1.490 1.490C10.020 21.620 11.510 22 13 22c2.300 0 4.610-.880 6.360-2.640 3.520-3.510 3.520-9.210 0-12.720z" fill="#fff" stroke="#fff" stroke-width="0.5"/></svg>
<svg style="left:1128.8px;top:10.9px" width="12.5" height="12.5" viewBox="0 0 24 24"><path d="M12 16l-5-5 1.400-1.450 2.600 2.600V4h2v8.150l2.600-2.600L17 11zm-6 4q-.825 0-1.412-.587T4 18v-3h2v3h12v-3h2v3q0 .825-.587 1.413T18 20z" fill="#fff"/></svg>
<svg style="left:1151.200px;top:11.200px" width="12.500" height="12.500" viewBox="0 0 24 24"><path d="M19 8H5c-1.660 0-3 1.340-3 3v6h4v4h12v-4h4v-6c0-1.660-1.340-3-3-3zm-3 11H8v-5h8v5zm3-7c-.55 0-1-.45-1-1s.45-1 1-1 1 .45 1 1-.45 1-1 1zm-1-9H6v4h12V3z" fill="#fff"/></svg>
<svg style="left:1173.800px;top:11.300px" width="12.500" height="12.500" viewBox="0 0 24 24"><path d="M12 8c1.100 0 2-.9 2-2s-.9-2-2-2-2 .9-2 2 .9 2 2 2zm0 2c-1.100 0-2 .9-2 2s.9 2 2 2 2-.9 2-2-.9-2-2-2zm0 6c-1.100 0-2 .9-2 2s.9 2 2 2 2-.9 2-2-.9-2-2-2z" fill="#fff"/></svg>

</div>
</body></html>
